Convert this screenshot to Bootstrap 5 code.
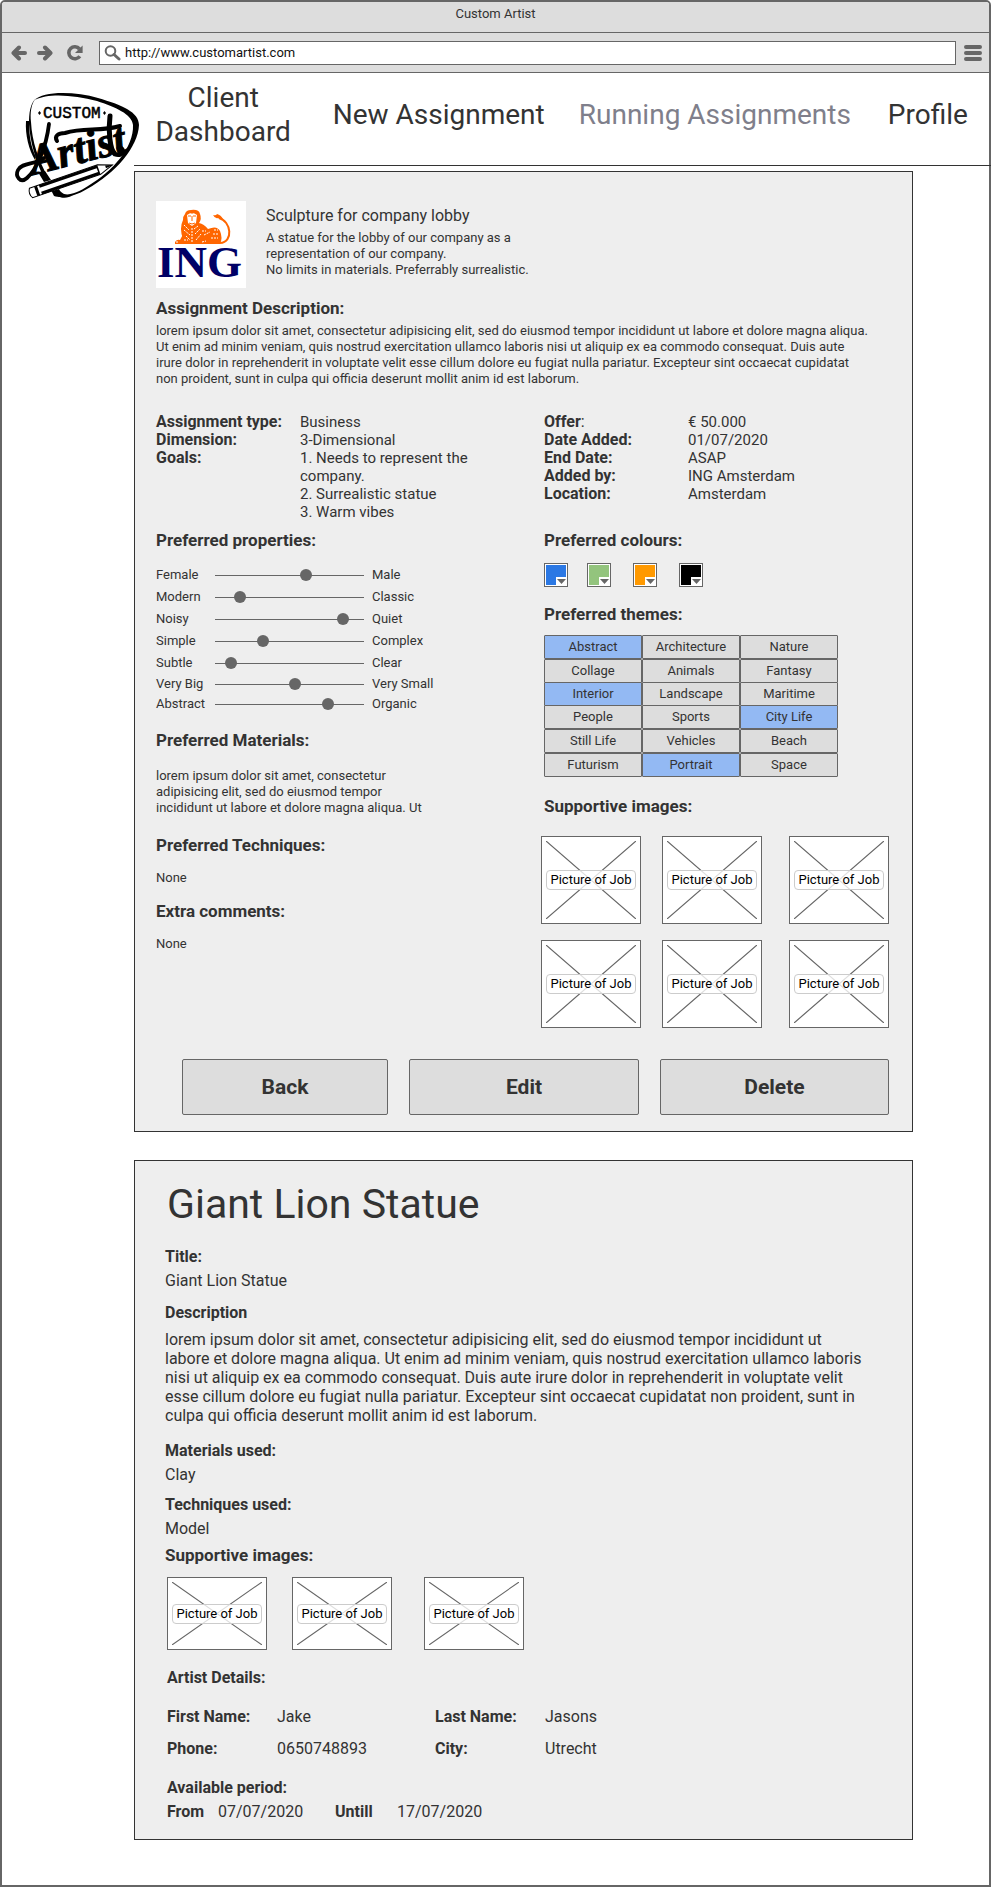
<!DOCTYPE html>
<html lang="en">
<head>
<meta charset="utf-8">
<meta name="viewport" content="width=device-width, initial-scale=1">
<title>Custom Artist</title>
<link href="https://cdn.jsdelivr.net/npm/bootstrap@5.3.0/dist/css/bootstrap.min.css" rel="stylesheet">
<style>
  :root { --ink: #333; --line: #666; --panel: #eee; --control: #ddd; --picked: #93b9f3; }
  body { font-family: Roboto, "Liberation Sans", sans-serif; font-size: 13px; line-height: 16px; color: var(--ink); background: #fff; }
  h1, h2, h3, p, dl, dd, dt, ol { margin: 0; padding: 0; }
  dd { color: var(--ink); }

  .window-frame { border: 2px solid var(--line); border-radius: 5px 5px 0 0; min-height: 100vh; padding-bottom: 44px; }
  .title-bar { background: var(--control); height: 31px; border-bottom: 1px solid var(--line); border-radius: 3px 3px 0 0; padding-top: 4px; }
  .tool-bar { background: var(--control); height: 40px; border-bottom: 1px solid var(--line); padding: 0 7px 0 8px; }
  .tool-btn { border: 0; background: none; padding: 0; line-height: 0; color: var(--line); }
  .url-box { border: 1px solid var(--line); background: #fff; height: 24px; padding: 0 4px; margin-left: 15px; margin-right: 8px; }
  .url-box input { border: 0; outline: 0; background: none; color: #111; font-size: 13px; line-height: 16px; padding: 0; min-width: 0; }

  .logo-col { width: 132px; }
  .logo-col svg { display: block; overflow: visible; }
  .site-nav { display: grid; grid-template-columns: 178fr 252fr 299fr 126fr; align-items: center; height: 93px; padding-bottom: 8px; border-bottom: 1px solid var(--ink); margin-right: -2px; }
  .site-nav a { font-size: 28px; line-height: 34px; color: var(--ink); text-align: center; text-decoration: none; }
  .site-nav a.current { color: #7f7f8b; }

  .panel-box { background: var(--panel); border: 1px solid var(--ink); margin-right: 76px; }
  .job-panel { margin-top: 5px; padding: 29px 23px 16px 21px; }
  .entry-panel { margin-top: 28px; padding: 19px 24px 15px 30px; }
  .split { display: grid; grid-template-columns: 385fr 348fr; }
  .inset { padding-left: 3px; }

  .sec-head { font-size: 17px; line-height: 24px; font-weight: 700; }
  .label-text { font-size: 16px; line-height: 24px; font-weight: 700; }
  .value-text { font-size: 16px; line-height: 24px; }
  .client-logo { width: 90px; height: 87px; background: #fff; margin-right: 20px; }
  .brief { max-width: 265px; }
  .brief h2 { font-size: 16px; line-height: 24px; font-weight: 400; margin: 3px 0 2px; }
  .long-copy { max-width: 714px; margin-top: 3px; }
  .facts { display: grid; grid-template-columns: 144px 180px; font-size: 15px; line-height: 18px; }
  .facts dt { font-size: 16px; }
  .facts ol { list-style: none; }

  .slider-list { display: grid; grid-template-columns: 59px 149px 1fr; grid-template-rows: repeat(5, 22px) 20px 20px; align-items: center; margin-top: 12px; }
  .slider-list span { padding-left: 8px; }
  .slider-list input { -webkit-appearance: none; appearance: none; width: 100%; height: 12px; margin: 0; background: linear-gradient(var(--line), var(--line)) center / 100% 1px no-repeat; }
  .slider-list input::-webkit-slider-thumb { -webkit-appearance: none; width: 12px; height: 12px; border: 0; border-radius: 50%; background: var(--line); }

  .swatches { display: grid; grid-template-columns: 43px 46px 46px 24px; margin-top: 11px; }
  .swatch { width: 24px; height: 24px; padding: 1px; border: 1px solid var(--line); background: #fff; line-height: 0; }
  .theme-grid { display: grid; grid-template-columns: repeat(3, 98px); grid-template-rows: 24px 23px 23px 24px 24px 24px; margin-top: 9px; }
  .theme-grid button { height: 24px; border: 1px solid var(--line); border-radius: 1px; background: var(--control); color: var(--ink); font-size: 13px; line-height: 16px; padding: 0; }
  .theme-grid button[aria-pressed=true] { background: var(--picked); }

  .photo { width: 100px; height: 88px; display: grid; place-items: center; background: #fff; border: 1px solid var(--line); }
  .photo.short { height: 73px; }
  .photo > * { grid-area: 1 / 1; }
  .photo svg { width: 100%; height: 100%; padding: 4px; min-height: 0; }
  .photo span { position: relative; width: 90px; height: 20px; line-height: 17px; border: 1px solid #ccc; border-radius: 4px; background: rgba(255,255,255,.78); color: #000; text-align: center; white-space: nowrap; }
  .photo-six { display: grid; grid-template-columns: 121fr 127fr 100fr; row-gap: 16px; margin-top: 18px; }
  .photo-three { display: grid; grid-template-columns: 125px 132px 100px; margin-top: 10px; }

  .actions { display: grid; grid-template-columns: 206fr 230fr 229fr; gap: 21px; margin: 31px 0 0 26px; }
  .actions button { height: 56px; border: 1px solid var(--line); border-radius: 2px; background: var(--control); color: var(--ink); font-size: 21px; line-height: 28px; font-weight: 700; }

  .entry-panel h1 { font-size: 41px; line-height: 48px; font-weight: 400; padding-left: 2px; margin-bottom: 17px; }
  .entry-copy { font-size: 16px; line-height: 19px; max-width: 700px; margin-top: 5px; }
  .contact { display: grid; grid-template-columns: 110px 158px 110px 1fr; row-gap: 8px; margin-top: 15px; }
</style>
</head>
<body>
<svg class="d-none" aria-hidden="true">
  <symbol id="cross" viewBox="0 0 90 78" preserveAspectRatio="none"><path d="M0 0 90 78M90 0 0 78" stroke="#666" stroke-width="1.2" fill="none"/></symbol>
</svg>
<div class="window-frame">
  <div class="title-bar text-center">Custom Artist</div>
  <div class="tool-bar d-flex align-items-center">
    <button class="tool-btn" aria-label="Back"><svg width="18" height="16" viewBox="0 0 18 16"><path d="M9 2.500 3.500 8 9 13.500M4 8H15" fill="none" stroke="currentColor" stroke-width="4" stroke-linecap="round" stroke-linejoin="round"/></svg></button>
    <button class="tool-btn ms-2" aria-label="Forward"><svg width="18" height="16" viewBox="0 0 18 16"><path d="M9 2.500 14.500 8 9 13.500M14 8H3" fill="none" stroke="currentColor" stroke-width="4" stroke-linecap="round" stroke-linejoin="round"/></svg></button>
    <button class="tool-btn ms-2 ps-1" aria-label="Reload"><svg width="18" height="16" viewBox="0 0 18 16"><path d="M13.500 4A6 6 0 1 0 13.800 11.200" fill="none" stroke="currentColor" stroke-width="3.600"/><path d="M16.600.5V8H9Z" fill="currentColor"/></svg></button>
    <div class="url-box d-flex align-items-center flex-grow-1">
      <svg width="17" height="16" viewBox="0 0 17 16" class="flex-shrink-0"><circle cx="6.500" cy="6" r="4.800" fill="none" stroke="#666" stroke-width="2"/><path d="M10 9.500 15 14" stroke="#666" stroke-width="3" stroke-linecap="round"/></svg>
      <input class="flex-grow-1 ms-1" type="text" aria-label="Address" value="http://www.customartist.com">
    </div>
    <button class="tool-btn" aria-label="Menu"><svg width="18" height="16" viewBox="0 0 18 16"><path d="M2 2H16M2 8H16M2 14H16" stroke="currentColor" stroke-width="4" stroke-linecap="round"/></svg></button>
  </div>

  <div class="d-flex">
    <div class="logo-col flex-shrink-0">
      <svg width="132" height="140" viewBox="2 73 132 140" role="img" aria-label="Custom Artist">
        <g fill="#000">
          <path d="M35 100C42 91 75 91 98 98C122 105 139 112 139 125C138 147 116 173 87 189C76 196 62 199 54 196L51 190C62 199 76 194 88 186C113 171 134 147 133 125C132 114 115 107 97 101C74 95 48 93 35 100Z"/>
          <path d="M36 98C30 104 29 113 29 124C30 142 36 162 45 180L49 179C38 160 32 141 31 122C30 113 31 104 36 98Z"/>
          <path d="M26 121C25 135 29 150 35 160L36 157C31 147 29 136 29 121Z"/>
          <path d="M38 172 45 171 51 180 44 182ZM52 191 59 189C61 194 68 196 73 195C66 200 57 198 52 191Z"/>
        </g>
        <text x="43" y="118" font-family="Liberation Mono, monospace" stroke="#000" stroke-width=".5" font-size="16">CUSTOM</text>
        <path d="m39.500 111 1.500 2-1.500 2-1.500-2ZM104.500 111l1.500 2-1.500 2-1.500-2Z"/>
        <text transform="translate(33 175) rotate(-14)" font-family="Liberation Serif, serif" font-weight="700" font-style="italic" font-size="43" stroke="#000" stroke-width="1">Artist</text>
        <g fill="none" stroke="#000" stroke-linecap="round">
          <path d="M49 124C46 149 36 170 27 178C20 184 15 176 18 170C22 162 35 165 44 158" stroke-width="3.800"/>
          <path d="M57 141C54 136 58 133 65 133C84 127 100 132 120 126" stroke-width="4"/>
          <path d="M110 116C108 131 110 150 115 154C123 157 125 148 119 148" stroke-width="5"/>
        </g>
        <g transform="translate(31 193) rotate(-19)">
          <path d="M0-5H72L86 0 72 5H0Q-3 0 0-5Z" fill="#fff" stroke="#000" stroke-width="1"/>
          <path d="M10-5H71V-2H10ZM10 2H71V5H10ZM5-5H8V5H5Z" fill="#000"/>
          <path d="M71-5V5" stroke="#000" stroke-width="1.500"/><path d="m79-2 8 2-8 1Z" fill="#000"/>
        </g>
      </svg>
    </div>

    <div class="flex-grow-1" style="min-width:0">
      <nav class="site-nav">
        <a href="#">Client<br>Dashboard</a>
        <a href="#">New Assignment</a>
        <a href="#" class="current" aria-current="page">Running Assignments</a>
        <a href="#">Profile</a>
      </nav>

      <main>
        <section class="panel-box job-panel">
          <div class="d-flex">
            <div class="client-logo flex-shrink-0">
              <svg width="90" height="87" viewBox="0 0 90 87" role="img" aria-label="ING">
                <g fill="#ff6600">
                  <path d="M29 13Q30 9 35 9Q43 8 44 13Q46 18 43 22Q48 23 52 28Q61 24 64 30Q67 37 64 43H27V38Q23 27 27 19Q27 15 29 13Z"/>
                  <path d="M19 41Q21 38 24 39Q27 33 29 31L33 41 35 43H19ZM44 41 47 37 53 40 52 43H43Z"/>
                </g>
                <path d="M64 42C78 41 75 20 63 17" fill="none" stroke="#ff6600" stroke-width="2"/>
                <path d="M57 14Q60 15 61 13Q65 14 67 18Q64 19 62 17Q59 18 57 14Z" fill="#ff6600"/>
                <path d="M31 14Q36 10 41 14L40 22 36 25 32 22Z" fill="#fff"/>
                <path d="M32 15H35M37 15H40M36 15V20M33 22Q36 24 39 22M36 10V13" stroke="#ff6600" fill="none"/>
                <path d="M28 24 33 29M28 29 34 34M30 35 34 39M36 27V41M38 28 42 25M39 33 44 28M40 39 45 33M46 30H50M48 34 54 31M58 29 62 29M57 33 62 33M55 37 62 37M28 39H32M20 41H23M46 41 50 40" stroke="#fff" stroke-width="1" stroke-dasharray="2 1"/>
                <text x="1" y="76" fill="#006" font-family="Liberation Serif, serif" font-weight="700" font-size="45">ING</text>
              </svg>
            </div>
            <div class="brief">
              <h2>Sculpture for company lobby</h2>
              <p>A statue for the lobby of our company as a representation of our company.</p>
              <p>No limits in materials. Preferrably surrealistic.</p>
            </div>
          </div>

          <h3 class="sec-head" style="margin-top:8px">Assignment Description:</h3>
          <p class="long-copy">lorem ipsum dolor sit amet, consectetur adipisicing elit, sed do eiusmod tempor incididunt ut labore et dolore magna aliqua. Ut enim ad minim veniam, quis nostrud exercitation ullamco laboris nisi ut aliquip ex ea commodo consequat. Duis aute irure dolor in reprehenderit in voluptate velit esse cillum dolore eu fugiat nulla pariatur. Excepteur sint occaecat cupidatat non proident, sunt in culpa qui officia deserunt mollit anim id est laborum.</p>

          <div class="split" style="margin-top:26px">
            <dl class="facts">
              <dt>Assignment type:</dt><dd>Business</dd>
              <dt>Dimension:</dt><dd>3-Dimensional</dd>
              <dt>Goals:</dt><dd><ol><li>1. Needs to represent the company.</li><li>2. Surrealistic statue</li><li>3. Warm vibes</li></ol></dd>
            </dl>
            <dl class="facts inset align-content-start">
              <dt>Offer<span class="fw-normal">:</span></dt><dd>€ 50.000</dd>
              <dt>Date Added:</dt><dd>01/07/2020</dd>
              <dt>End Date:</dt><dd>ASAP</dd>
              <dt>Added by:</dt><dd>ING Amsterdam</dd>
              <dt>Location:</dt><dd>Amsterdam</dd>
            </dl>
          </div>

          <div class="split" style="margin-top:7px">
            <div>
              <h3 class="sec-head">Preferred properties:</h3>
              <div class="slider-list">
                <label for="r1">Female</label><input id="r1" type="range" value="62"><span>Male</span>
                <label for="r2">Modern</label><input id="r2" type="range" value="14"><span>Classic</span>
                <label for="r3">Noisy</label><input id="r3" type="range" value="89"><span>Quiet</span>
                <label for="r4">Simple</label><input id="r4" type="range" value="31"><span>Complex</span>
                <label for="r5">Subtle</label><input id="r5" type="range" value="7"><span>Clear</span>
                <label for="r6">Very Big</label><input id="r6" type="range" value="54"><span>Very Small</span>
                <label for="r7">Abstract</label><input id="r7" type="range" value="78"><span>Organic</span>
              </div>
              <h3 class="sec-head" style="margin-top:14px">Preferred Materials:</h3>
              <p style="margin-top:16px;max-width:272px">lorem ipsum dolor sit amet, consectetur adipisicing elit, sed do eiusmod tempor incididunt ut labore et dolore magna aliqua. Ut</p>
              <h3 class="sec-head" style="margin-top:17px">Preferred Techniques:</h3>
              <p style="margin-top:13px">None</p>
              <h3 class="sec-head" style="margin-top:13px">Extra comments:</h3>
              <p style="margin-top:13px">None</p>
            </div>
            <div>
              <div class="inset">
                <h3 class="sec-head">Preferred colours:</h3>
                <div class="swatches">
                  <button class="swatch" aria-label="Blue"><svg width="20" height="20"><path d="M0 0H20V20H0Z" fill="#2b78e4"/><path d="M10 12H20V20H10Z" fill="#fff"/><path d="M11 14H20L15.500 19Z" fill="#666"/></svg></button>
                  <button class="swatch" aria-label="Green"><svg width="20" height="20"><path d="M0 0H20V20H0Z" fill="#93c47d"/><path d="M10 12H20V20H10Z" fill="#fff"/><path d="M11 14H20L15.500 19Z" fill="#666"/></svg></button>
                  <button class="swatch" aria-label="Orange"><svg width="20" height="20"><path d="M0 0H20V20H0Z" fill="#ff9900"/><path d="M10 12H20V20H10Z" fill="#fff"/><path d="M11 14H20L15.500 19Z" fill="#666"/></svg></button>
                  <button class="swatch" aria-label="Black"><svg width="20" height="20"><path d="M0 0H20V20H0Z" fill="#000"/><path d="M10 12H20V20H10Z" fill="#fff"/><path d="M11 14H20L15.500 19Z" fill="#666"/></svg></button>
                </div>
                <h3 class="sec-head" style="margin-top:15px">Preferred themes:</h3>
                <div class="theme-grid">
                  <button aria-pressed="true">Abstract</button><button>Architecture</button><button>Nature</button>
                  <button>Collage</button><button>Animals</button><button>Fantasy</button>
                  <button aria-pressed="true">Interior</button><button>Landscape</button><button>Maritime</button>
                  <button>People</button><button>Sports</button><button aria-pressed="true">City Life</button>
                  <button>Still Life</button><button>Vehicles</button><button>Beach</button>
                  <button>Futurism</button><button aria-pressed="true">Portrait</button><button>Space</button>
                </div>
                <h3 class="sec-head" style="margin-top:17px">Supportive images:</h3>
              </div>
              <div class="photo-six">
                <div class="photo"><svg><use href="#cross"/></svg><span>Picture of Job</span></div>
                <div class="photo"><svg><use href="#cross"/></svg><span>Picture of Job</span></div>
                <div class="photo"><svg><use href="#cross"/></svg><span>Picture of Job</span></div>
                <div class="photo"><svg><use href="#cross"/></svg><span>Picture of Job</span></div>
                <div class="photo"><svg><use href="#cross"/></svg><span>Picture of Job</span></div>
                <div class="photo"><svg><use href="#cross"/></svg><span>Picture of Job</span></div>
              </div>
            </div>
          </div>

          <div class="actions"><button>Back</button><button>Edit</button><button>Delete</button></div>
        </section>

        <section class="panel-box entry-panel">
          <h1>Giant Lion Statue</h1>
          <h3 class="label-text">Title:</h3>
          <p class="value-text">Giant Lion Statue</p>
          <h3 class="label-text mt-2">Description</h3>
          <p class="entry-copy">lorem ipsum dolor sit amet, consectetur adipisicing elit, sed do eiusmod tempor incididunt ut labore et dolore magna aliqua. Ut enim ad minim veniam, quis nostrud exercitation ullamco laboris nisi ut aliquip ex ea commodo consequat. Duis aute irure dolor in reprehenderit in voluptate velit esse cillum dolore eu fugiat nulla pariatur. Excepteur sint occaecat cupidatat non proident, sunt in culpa qui officia deserunt mollit anim id est laborum.</p>
          <h3 class="label-text" style="margin-top:14px">Materials used:</h3>
          <p class="value-text">Clay</p>
          <h3 class="label-text" style="margin-top:6px">Techniques used:</h3>
          <p class="value-text">Model</p>
          <h3 class="sec-head" style="margin-top:2px">Supportive images:</h3>
          <div style="padding-left:2px">
            <div class="photo-three">
              <div class="photo short"><svg><use href="#cross"/></svg><span>Picture of Job</span></div>
              <div class="photo short"><svg><use href="#cross"/></svg><span>Picture of Job</span></div>
              <div class="photo short"><svg><use href="#cross"/></svg><span>Picture of Job</span></div>
            </div>
            <h3 class="label-text" style="margin-top:16px">Artist Details:</h3>
            <dl class="contact value-text">
              <dt>First Name:</dt><dd>Jake</dd><dt>Last Name:</dt><dd>Jasons</dd>
              <dt>Phone:</dt><dd>0650748893</dd><dt>City:</dt><dd>Utrecht</dd>
            </dl>
            <h3 class="label-text" style="margin-top:15px">Available period:</h3>
            <dl class="value-text d-flex">
              <dt style="width:51px">From</dt><dd style="width:117px">07/07/2020</dd>
              <dt style="width:62px">Untill</dt><dd>17/07/2020</dd>
            </dl>
          </div>
        </section>
      </main>
    </div>
  </div>
</div>
<script src="https://cdn.jsdelivr.net/npm/bootstrap@5.3.0/dist/js/bootstrap.bundle.min.js"></script>
</body>
</html>
